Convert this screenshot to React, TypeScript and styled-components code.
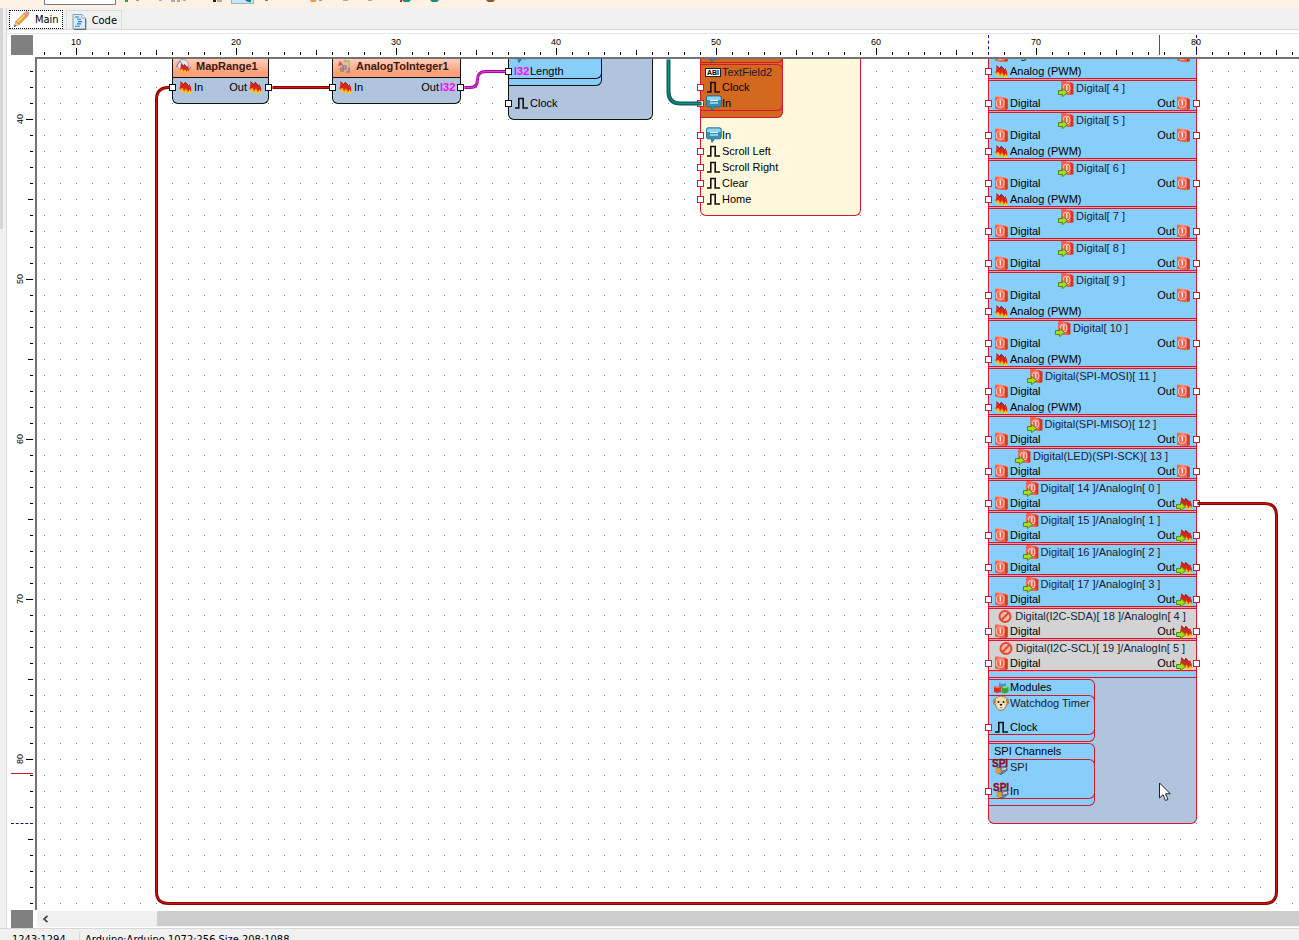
import React, { useEffect, useState } from "react";
import styled, { createGlobalStyle, css } from "styled-components";

const RED = "#d3182f";
const SKY = "#87cefa";
const STEEL = "#b0c4de";

const GlobalStyle = createGlobalStyle`
  * { box-sizing: border-box; }
  html, body, #root { height: 100%; }
  body {
    margin: 0;
    overflow: hidden;
    background: #f0f0f0;
    color: #000;
    font: 11px/16px "Liberation Sans", Arial, sans-serif;
  }
  button { font: inherit; color: inherit; padding: 0; margin: 0; border: 0; background: none; }
`;

const Page = styled.div`
  display: flex;
  flex-direction: column;
  height: 100vh;
`;

/* ---------- toolbar ---------- */

const Toolbar = styled.div`
  flex: none;
  height: 8px;
  overflow: hidden;
  display: flex;
  align-items: flex-start;
  padding-left: 44px;
  background: #fdf0e4;
`;

const SearchBox = styled.input`
  width: 72px;
  height: 5px;
  padding: 0;
  border: 1px solid #7a7a7a;
  border-top: 0;
  background: #fff;
`;

const ToolButton = styled.button<{ $active?: boolean }>`
  flex: none;
  width: 23px;
  height: 4px;
  display: flex;
  ${(p) => p.$active && css`
    background: #cce4f7;
    border: 1px solid #8ab8dc;
    border-top: 0;
  `}
  svg { display: block; overflow: visible; }
`;

/* ---------- body ---------- */

const Body = styled.div`
  flex: 1;
  min-height: 0;
  display: flex;
`;

const SideStrip = styled.div`
  flex: none;
  width: 7px;
  border-right: 1px solid #d5dcdc;
  background: #f0f0f0;
`;

const SideThumb = styled.div`
  width: 3px;
  height: 24%;
  background: #d6d6d6;
`;

const Main = styled.div`
  flex: 1;
  min-width: 0;
  display: flex;
  flex-direction: column;
`;

const Tabs = styled.div`
  flex: none;
  height: 22px;
  display: flex;
  align-items: flex-start;
  gap: 3px;
  padding: 2px 2px 0;
  border-bottom: 1px solid #d9d9d9;
`;

const Tab = styled.button<{ $active?: boolean }>`
  height: ${(p) => (p.$active ? 19 : 20)}px;
  display: flex;
  align-items: center;
  gap: 5px;
  padding: ${(p) => (p.$active ? "0 3px" : "2px 4px 0 5px")};
  font-family: "DejaVu Sans Condensed", "Liberation Sans", sans-serif;
  line-height: 16px;
  border: 1px solid #dcdcdc;
  ${(p) => p.$active && css`
    background: #fff;
    border: 1px dotted #000;
  `}
`;

const Workspace = styled.div`
  flex: 1;
  min-height: 0;
  display: grid;
  grid-template-columns: 24px minmax(0, 1fr);
  grid-template-rows: 22px minmax(0, 1fr) 18px;
  margin-top: 3px;
  padding: 1px 0 0 4px;
  background: #fff;
  border-top: 1px solid #e6e6e6;
  box-shadow: 0 -3px 0 #fff;
`;

const Corner = styled.div<{ $gap?: number }>`
  width: 22px;
  margin-bottom: ${(p) => p.$gap ?? 0}px;
  background: #808080;
`;

const HRuler = styled.div`
  position: relative;
  display: flex;
  overflow: hidden;
  padding: 1px 0 2px 1px;
`;

const VRuler = styled.div`
  position: relative;
  display: flex;
  flex-direction: column;
  overflow: hidden;
  padding-top: 6px;
  width: 22px;
`;

const HCell = styled.div`
  flex: none;
  width: 16px;
  display: flex;
  flex-direction: column;
  align-items: center;
  font-size: 9px;
  line-height: 12px;
`;

const VCell = styled.div`
  flex: none;
  height: 16px;
  display: flex;
  align-items: center;
  justify-content: space-between;
  padding-left: 3px;
  font-size: 9px;
  line-height: 12px;
`;

const VLabel = styled.span`
  writing-mode: vertical-rl;
  transform: rotate(180deg);
`;

const HTick = styled.i<{ $size: number }>`
  width: 1px;
  height: ${(p) => p.$size}px;
  margin-top: auto;
  background: #000;
`;

const VTick = styled.i<{ $size: number }>`
  height: 1px;
  width: ${(p) => p.$size}px;
  margin-left: auto;
  background: #000;
`;

const HMarker = styled.i<{ $at: number; $dashed?: boolean }>`
  position: absolute;
  top: 0;
  left: ${(p) => p.$at}px;
  height: 20px;
  border-left: 1px ${(p) => (p.$dashed ? "dashed #1414a0" : `solid ${RED}`)};
`;

const VMarker = styled.i<{ $at: number; $dashed?: boolean }>`
  position: absolute;
  left: 0;
  top: ${(p) => p.$at}px;
  width: 22px;
  border-top: 1px ${(p) => (p.$dashed ? "dashed #14147a" : `solid ${RED}`)};
`;

const Canvas = styled.div`
  position: relative;
  overflow: hidden;
  border: solid #737373;
  border-width: 2px 0 0 2px;
  background: #fff;
`;

const Layer = styled.svg`
  position: absolute;
  inset: 0;
  width: 100%;
  height: 100%;
  pointer-events: none;
`;

const Pointer = styled.svg`
  position: absolute;
  left: 1122px;
  top: 723px;
`;

const ScrollBar = styled.div`
  display: flex;
  height: 16px;
  margin: 1px 0 0 2px;
  background: #f0f0f0;
`;

const ScrollArrow = styled.button`
  width: 17px;
  display: grid;
  place-items: center;
`;

const ScrollThumb = styled.div`
  flex: 1;
  margin-left: 103px;
  height: 15px;
  background: #cdcdcd;
`;

const StatusBar = styled.div`
  flex: none;
  height: 12px;
  overflow: hidden;
  display: flex;
  gap: 5px;
  padding: 3px 0 0 12px;
  border-top: 1px solid #d7d7d7;
  font-size: 11px;
  line-height: 16px;
  font-family: "DejaVu Sans Condensed", "Liberation Sans", sans-serif;
  white-space: nowrap;
`;

const StatusCell = styled.span`
  min-width: 68px;
  border-right: 1px solid #d7d7d7;
`;

/* ---------- nodes ---------- */

const Node = styled.section<{ $x: number; $y: number; $w: number; $bg: string; $line: string; $pad?: number }>`
  position: absolute;
  left: ${(p) => p.$x}px;
  top: ${(p) => p.$y}px;
  width: ${(p) => p.$w}px;
  padding-bottom: ${(p) => p.$pad ?? 8}px;
  border: 1px solid ${(p) => p.$line};
  border-top: 0;
  border-radius: 0 0 6px 6px;
  background: ${(p) => p.$bg};
  --line: ${(p) => p.$line};
  white-space: nowrap;
`;

const Header = styled.h2`
  display: flex;
  align-items: center;
  gap: 4px;
  height: 24px;
  margin: 0 0 1px;
  padding: 0 2px;
  font-size: 11px;
  color: #3a1a10;
  border-bottom: 1px solid var(--line);
  background: linear-gradient(#ffe0d4, #ffa07a 80%);
`;

const Group = styled.div<{ $w: number; $bg: string; $top?: number; $pad?: number }>`
  width: ${(p) => p.$w}px;
  margin-top: ${(p) => p.$top ?? 0}px;
  padding-bottom: ${(p) => p.$pad ?? 6}px;
  background: ${(p) => p.$bg};
  border: 1px solid var(--line);
  border-left: 0;
  border-radius: 0 6px 6px 0;
`;

const GroupTitle = styled.div`
  display: flex;
  height: 15px;
  line-height: 15px;
  padding-left: 5px;
`;

const Element = styled.div<{ $gap?: number; $bottom?: number }>`
  margin: 0 -1px ${(p) => p.$bottom ?? 0}px 0;
  border: 1px solid var(--line);
  border-left: 0;
  border-radius: 0 6px 6px 0;
  > :last-child { margin-bottom: -1px; }
  > :nth-child(2) { margin-top: ${(p) => p.$gap ?? 0}px; }
`;

const ElementTitle = styled.div<{ $h?: number }>`
  display: flex;
  align-items: center;
  height: ${(p) => p.$h ?? 14}px;
  padding-left: 4px;
  color: #1a1a2a;
  svg, b { flex: none; margin-right: 1px; }
`;

const ChannelList = styled.div`
  padding-bottom: 5px;
  border-bottom: 1px solid var(--line);
  background: ${SKY};
`;

const Channel = styled.div<{ $off?: boolean }>`
  border: solid var(--line);
  border-width: 1px 0;
  background: ${(p) => (p.$off ? "#d3d3d3" : SKY)};
  box-shadow: 0 1px 0 #e59bb4;
  margin-bottom: 1px;
  > :last-child { margin-bottom: -1px; }
`;

const ChannelTitle = styled.div`
  height: 14px;
  display: flex;
  justify-content: center;
  align-items: center;
  gap: 2px;
  padding-right: 2px;
  color: #14233a;
  svg { flex: none; position: relative; top: 1px; }
`;

const PinRow = styled.div<{ $before?: number }>`
  position: relative;
  display: flex;
  align-items: center;
  justify-content: space-between;
  height: 16px;
  margin-top: ${(p) => p.$before ?? 0}px;
  padding: 0 4px 0 5px;
`;

const PinLabel = styled.span`
  display: flex;
  align-items: center;
  height: 16px;
`;

const IconSlot = styled.span`
  display: flex;
  width: 16px;
`;

const OutText = styled.span`
  margin-right: 1px;
`;

const Port = styled.i<{ $side: "left" | "right" }>`
  position: absolute;
  top: 5px;
  ${(p) => p.$side}: -4px;
  width: 7px;
  height: 7px;
  background: #fff;
  border: 1px solid var(--line);
`;

const TypeTag = styled.b`
  color: #ff00ff;
`;

const AbcTag = styled.b`
  width: 16px;
  height: 9px;
  padding: 0 1px;
  border: 1px solid #222;
  background: #fff;
  color: #000;
  font-size: 7px;
  line-height: 8px;
  overflow: hidden;
`;

/* ---------- icons ---------- */

const DigitalIcon = () => (
  <svg width="16" height="16" viewBox="0 0 16 16">
    <path d="M1 1.500 11 2.500 13.800 4V14.200L11 15 1 13.700Z" fill="#d23a24" />
    <path d="M1 1.500 11 2.600V15L1 13.700Z" fill="#f4634b" />
    <path d="M1 1.500 11 2.600 13.800 4" fill="none" stroke="#f9a493" strokeWidth=".8" />
    <ellipse cx="6.200" cy="8.200" rx="3.800" ry="4.200" fill="none" stroke="#ffd9d0" strokeWidth=".9" />
    <path d="M5.300 6.500 6.300 6V10.500" fill="none" stroke="#fff" strokeWidth="1.100" />
  </svg>
);

const GreenArrow = () => (
  <path d="M.5 9.500H4.500V7.300L9.500 11.500 4.500 15.700V13.500H.5Z" fill="#a6dc1c" stroke="#4f7d0c" strokeWidth=".9" />
);

const DigitalInOutIcon = () => (
  <svg width="16" height="16" viewBox="0 0 16 16">
    <path d="M3.500 .3 12.500 1.300 15.500 2.700V13.300L12.500 14 3.500 12.500Z" fill="#d23a24" />
    <path d="M3.500 .3 12.500 1.300V14L3.500 12.500Z" fill="#f4634b" />
    <ellipse cx="8.600" cy="7" rx="3.400" ry="4" fill="none" stroke="#ffd9d0" strokeWidth=".9" />
    <path d="M7.800 5.300 8.800 4.800V9.300" fill="none" stroke="#fff" strokeWidth="1.100" />
    <GreenArrow />
  </svg>
);

const flame = (
  <>
    <path d="M2 8 5 6 9 9 13 8.500V14.500H9L6.500 12 5 14 1.500 11.500Z" fill="#ffcf1c" />
    <path d="M1.300 10.500Q2.500 7 2.500 2.500L6 5.500 7.300 3 10.500 6.500 11.500 5 13.300 9.500 13 13 11.500 10.500 10 13 8 9.500 5.800 12.500 4.500 8.800Z" fill="#d7261b" />
    <path d="M2.600 2.700 6 5.700 7.300 3.200 10.300 6.700" fill="none" stroke="#8b1a14" strokeWidth=".9" />
    <path d="M2 11 4.800 10 5.800 13 8 11 9.800 14" fill="none" stroke="#f39a14" strokeWidth=".9" />
  </>
);

const AnalogIcon = () => (
  <svg width="16" height="16" viewBox="0 0 16 16">{flame}</svg>
);

const AnalogOutIcon = () => (
  <svg width="16" height="16" viewBox="0 0 16 16">
    <g transform="translate(2.500 0)">{flame}</g>
    <GreenArrow />
  </svg>
);

const ClockIcon = () => (
  <svg width="16" height="16" viewBox="0 0 16 16">
    <path d="M1 13H4.800V3.500H9.200V13H14" fill="none" stroke="#111" strokeWidth="1.600" />
  </svg>
);

const ChatIcon = () => (
  <svg width="16" height="16" viewBox="0 0 16 16">
    <path d="M2 .8H13.500Q15.300 .8 15.300 2.800V9.800Q15.300 11.800 13.500 11.800H8.500L6 15.500 5 11.800H2Q.4 11.800 .4 9.800V2.800Q.4 .8 2 .8Z" fill="#2f93bd" stroke="#1a6588" strokeWidth=".8" />
    <path d="M2 1.500H13.500Q14.700 1.500 14.700 3V5H1V3Q1 1.500 2 1.500Z" fill="#8fd3ec" />
    <path d="M4 5.500H12M4 8H12" stroke="#fff" strokeWidth="1.200" />
  </svg>
);

const DisabledIcon = () => (
  <svg width="16" height="16" viewBox="0 0 16 16">
    <circle cx="8" cy="7.500" r="5.500" fill="#f7b9a8" stroke="#e2492f" strokeWidth="2" />
    <path d="M11.500 3.800 4.500 11" stroke="#e2492f" strokeWidth="2" />
  </svg>
);

const CubesIcon = () => (
  <svg width="16" height="15" viewBox="0 0 16 15">
    <path d="M5 3 9 2 12 3V8H5Z" fill="#4f8fd0" />
    <path d="M5 3 9 2 12 3 8.500 4Z" fill="#a6cdf0" />
    <path d="M0 7 4 6 7 7V12L3 13 0 12Z" fill="#d9322b" />
    <path d="M0 7 4 6 7 7 3.500 8Z" fill="#f58b80" />
    <path d="M7.500 7 11 6 14.500 7V12L11 13.500 7.500 12.500Z" fill="#32a83b" />
    <path d="M7.500 7 11 6 14.500 7 11 8.200Z" fill="#97e08e" />
  </svg>
);

const DogIcon = () => (
  <svg width="16" height="16" viewBox="0 0 16 16">
    <path d="M3 2.500Q8-.5 13 2.500 16 4 15.500 8.500 14.500 10 13.500 9.500 12.500 15 8 15.500 3.500 15 2.500 9.500 1 10 .5 8.500 0 4 3 2.500Z" fill="#f0d9b0" stroke="#8a6a3c" strokeWidth=".8" />
    <path d="M3 3Q.5 5 1 8.500L2.500 9ZM13 3Q15.500 5 15 8.500L13.500 9Z" fill="#a9773e" />
    <ellipse cx="8" cy="11" rx="3" ry="2.800" fill="#fff6e2" />
    <circle cx="5.500" cy="7" r="1" fill="#2b1a10" />
    <circle cx="10.500" cy="7" r="1" fill="#2b1a10" />
    <ellipse cx="8" cy="9.700" rx="1.500" ry="1" fill="#2b1a10" />
    <path d="M6.500 12.300Q8 13.500 9.500 12.300" fill="none" stroke="#7b3a1a" strokeWidth=".7" />
  </svg>
);

const SpiIcon = () => (
  <svg width="16" height="16" viewBox="0 0 16 16" style={{ overflow: "visible" }}>
    <path d="M4 8.500 12 7 14.500 11 8 15.500 3 13Z" fill="#6d7f99" stroke="#3f4759" strokeWidth=".7" />
    <path d="M2 9.500 7 9 8 14 4 14.500Z" fill="#e0a030" />
    <path d="M9 10.500 13 9.500" stroke="#d8e2ef" strokeWidth="1.300" />
    <text x="-1" y="8" fontFamily="Liberation Sans" fontSize="10" fontWeight="bold" fill="#8c0a1a" stroke="#8c0a1a" strokeWidth=".3">SPI</text>
  </svg>
);

const MapRangeIcon = () => (
  <svg width="17" height="16" viewBox="0 0 17 16">
    <circle cx="8" cy="7" r="5.500" fill="#efe4e4" stroke="#a8a0ac" />
    <path d="M1 9 5 3 9 9 13 13 16 9" fill="none" stroke="#7b6fa8" strokeWidth="1" />
    <g transform="translate(4 4) scale(.75)">{flame}</g>
  </svg>
);

const ToIntegerIcon = () => (
  <svg width="17" height="16" viewBox="0 0 17 16">
    <path d="M2 8 4 2 7 4 9 1 13 3 11 8Z" fill="#f3b0a4" />
    <path d="M3 8 5 3 8 7Z" fill="#c85a4a" />
    <path d="M9 3H14V8" fill="none" stroke="#9bbf6a" strokeWidth="1.400" />
    <path d="M6 14V9M8 14V8H11V11H8M11 14H14V9" fill="none" stroke="#5e6d94" strokeWidth="1.100" />
    <path d="M1 14.500H6M3 11H5" stroke="#e0b020" strokeWidth="1.300" />
  </svg>
);

const PencilIcon = () => (
  <svg width="17" height="17" viewBox="0 0 17 17">
    <path d="M1 15.500 3 10.500 6 13.500Z" fill="#f2d6a8" stroke="#9b7a45" strokeWidth=".6" />
    <path d="M3 10.500 11 2.500 14 5.500 6 13.500Z" fill="#f5a431" stroke="#b56a12" strokeWidth=".7" />
    <path d="M4.300 11 11.700 3.700" stroke="#ffd98a" strokeWidth="1.300" />
    <path d="M11 2.500 12.500 1Q14-.2 15.300 1.200 16.600 2.700 15.500 4L14 5.500Z" fill="#e9a196" stroke="#9f6a62" strokeWidth=".6" />
    <path d="M1 15.700 1.800 13.700 3 15Z" fill="#333" />
  </svg>
);

const CodeIcon = () => (
  <svg width="15" height="17" viewBox="0 0 15 17">
    <path d="M1 1.500H10L13.500 5V16H1Z" fill="#dcebfa" stroke="#7f9dbd" />
    <path d="M10 1.500V5H13.500" fill="#fff" stroke="#7f9dbd" strokeWidth=".8" />
    <path d="M3 4H7M5 6.300H9M6 8.600H10M5 10.900H9M3 13.200H8" stroke="#2f78c8" strokeWidth="1.100" />
    <path d="M13.800 6V16.500H2" fill="none" stroke="#4a4f58" strokeWidth=".8" />
  </svg>
);

/* ---------- data ---------- */

const tools: { mark: React.ReactNode; active?: boolean }[] = [
  { mark: <><path d="M9 0h3v2h-3z" fill="#2ea02e" /><path d="M20 0h3v1h-3z" fill="#999" /></> },
  { mark: <path d="M20 0h3v1h-3z" fill="#aaa" /> },
  { mark: <path d="M9 0h4v2h-4zM15 0h3v2h-3zM21 0h3v1h-3z" fill="#aaa" /> },
  { mark: null },
  { mark: <><path d="M5 0h3v2h-3z" fill="#222" /><path d="M9 0h5v2h-5z" fill="#b5a9a0" /></> },
  { mark: <path d="M13 0h6v2h-3z" fill="#17836c" />, active: true },
  { mark: <path d="M11 0h3v1h-3z" fill="#777" /> },
  { mark: null },
  { mark: <><path d="M10 0h6v2h-5z" fill="#e9a04a" /><path d="M19 0h3v1h-3z" fill="#999" /></> },
  { mark: <path d="M20 0h5v1h-5z" fill="#b5a9a0" /> },
  { mark: <path d="M22 0h4v1h-4z" fill="#b5a9a0" /> },
  { mark: null },
  { mark: <><path d="M8 0h2v2h-2z" fill="#e0203a" /><path d="M10 0h9l-2 2h-5z" fill="#1c8a7c" /></> },
  { mark: <path d="M15 0h9l-2 2h-5z" fill="#1c8a7c" /> },
  { mark: null },
  { mark: null },
  { mark: <path d="M2 0h9l-2 2h-5z" fill="#8a5a2a" /> },
];

type ChannelData = { title: string; pwm?: boolean; analog?: boolean; off?: boolean };

const channels: ChannelData[] = [
  { title: "Digital[ 3 ]", pwm: true },
  { title: "Digital[ 4 ]" },
  { title: "Digital[ 5 ]", pwm: true },
  { title: "Digital[ 6 ]", pwm: true },
  { title: "Digital[ 7 ]" },
  { title: "Digital[ 8 ]" },
  { title: "Digital[ 9 ]", pwm: true },
  { title: "Digital[ 10 ]", pwm: true },
  { title: "Digital(SPI-MOSI)[ 11 ]", pwm: true },
  { title: "Digital(SPI-MISO)[ 12 ]" },
  { title: "Digital(LED)(SPI-SCK)[ 13 ]" },
  { title: "Digital[ 14 ]/AnalogIn[ 0 ]", analog: true },
  { title: "Digital[ 15 ]/AnalogIn[ 1 ]", analog: true },
  { title: "Digital[ 16 ]/AnalogIn[ 2 ]", analog: true },
  { title: "Digital[ 17 ]/AnalogIn[ 3 ]", analog: true },
  { title: "Digital(I2C-SDA)[ 18 ]/AnalogIn[ 4 ]", analog: true, off: true },
  { title: "Digital(I2C-SCL)[ 19 ]/AnalogIn[ 5 ]", analog: true, off: true },
];

/* ---------- parts ---------- */

type PinProps = {
  label: string;
  icon: React.ReactNode;
  out?: React.ReactNode;
  before?: number;
};

const Pin = ({ label, icon, out, before }: PinProps) => (
  <PinRow $before={before}>
    <Port $side="left" />
    <PinLabel><IconSlot>{icon}</IconSlot>{label}</PinLabel>
    {out && (
      <>
        <PinLabel><OutText>Out</OutText><IconSlot>{out}</IconSlot></PinLabel>
        <Port $side="right" />
      </>
    )}
  </PinRow>
);

const tickSize = (n: number) => (n % 10 === 0 ? 7 : n % 5 === 0 ? 5 : 3);
const range = (from: number, count: number) => Array.from({ length: count }, (_, i) => from + i);

/* Number of 16px grid units that fit along each ruler. */
const countUnits = () => ({
  across: Math.ceil((window.innerWidth - 36) / 16),
  down: Math.ceil((window.innerHeight - 93) / 16),
});

const useUnits = () => {
  const [units, setUnits] = useState(countUnits);
  useEffect(() => {
    const update = () => setUnits(countUnits());
    window.addEventListener("resize", update);
    return () => window.removeEventListener("resize", update);
  }, []);
  return units;
};

const Wire = ({ d, edge, core, width = 3 }: { d: string; edge: string; core: string; width?: number }) => (
  <g fill="none" transform="translate(.5 .5)">
    <path d={d} stroke={edge} strokeWidth={width} />
    <path d={d} stroke={core} strokeWidth={1} />
  </g>
);

export default function App() {
  const units = useUnits();
  return (
    <Page>
      <GlobalStyle />
      <Toolbar>
        <SearchBox aria-label="Search" />
        {tools.map((t, i) => (
          <ToolButton key={i} $active={t.active} aria-label={`Tool ${i + 1}`}>
            <svg width="21" height="3">{t.mark}</svg>
          </ToolButton>
        ))}
      </Toolbar>

      <Body>
        <SideStrip><SideThumb /></SideStrip>
        <Main>
          <Tabs role="tablist">
            <Tab role="tab" aria-selected="true" $active><PencilIcon />Main</Tab>
            <Tab role="tab" aria-selected="false"><CodeIcon />Code</Tab>
          </Tabs>

          <Workspace>
            <Corner $gap={2} />
            <HRuler>
              {range(8, units.across).map((n) => (
                <HCell key={n}>
                  {n % 10 === 0 && <span>{n}</span>}
                  <HTick $size={tickSize(n)} />
                </HCell>
              ))}
              <HMarker $at={953} $dashed />
              <HMarker $at={1161} $dashed />
              <HMarker $at={1124} />
            </HRuler>

            <VRuler>
              {range(37, units.down).map((n) => (
                <VCell key={n}>
                  {n % 10 === 0 && n < 37 + units.down - 1 && <VLabel>{n}</VLabel>}
                  <VTick $size={tickSize(n)} />
                </VCell>
              ))}
              <VMarker $at={716} />
              <VMarker $at={766} $dashed />
            </VRuler>

            <Canvas>
              <Layer>
                <defs>
                  <pattern id="dots" x="7" y="12" width="16" height="16" patternUnits="userSpaceOnUse">
                    <rect width="1" height="1" fill="#8c8c8c" />
                  </pattern>
                </defs>
                <rect width="100%" height="100%" fill="url(#dots)" />
              </Layer>

              <Node $x={135} $y={-5} $w={97} $bg={STEEL} $line="#111">
                <Header><MapRangeIcon />MapRange1</Header>
                <Pin label="In" icon={<AnalogIcon />} out={<AnalogIcon />} />
              </Node>

              <Node $x={295} $y={-5} $w={129} $bg={STEEL} $line="#111">
                <Header><ToIntegerIcon />AnalogToInteger1</Header>
                <Pin label="In" icon={<AnalogIcon />} out={<TypeTag>I32</TypeTag>} />
              </Node>

              <Node $x={471} $y={-13} $w={145} $bg={STEEL} $line="#111">
                <Group $w={93} $bg={SKY} $top={-1}>
                  <Element>
                    <ElementTitle $h={16}><ChatIcon /></ElementTitle>
                    <Pin label="Length" icon={<TypeTag>I32</TypeTag>} />
                  </Element>
                </Group>
                <Pin label="Clock" icon={<ClockIcon />} before={9} />
              </Node>

              <Node $x={663} $y={-44} $w={161} $bg="#fff8dc" $line={RED}>
                <Group $w={82} $bg="#d2691e" $pad={5}>
                  {["TextField1", "TextField2"].map((name) => (
                    <Element key={name} $bottom={1}>
                      <ElementTitle><AbcTag>ABI</AbcTag>{name}</ElementTitle>
                      <Pin label="Clock" icon={<ClockIcon />} />
                      <Pin label="In" icon={<ChatIcon />} />
                    </Element>
                  ))}
                </Group>
                <Pin label="In" icon={<ChatIcon />} before={9} />
                <Pin label="Scroll Left" icon={<ClockIcon />} />
                <Pin label="Scroll Right" icon={<ClockIcon />} />
                <Pin label="Clear" icon={<ClockIcon />} />
                <Pin label="Home" icon={<ClockIcon />} />
              </Node>

              <Node $x={951} $y={-27} $w={209} $bg={STEEL} $line={RED} $pad={17}>
                <ChannelList>
                  {channels.map((c) => (
                    <Channel key={c.title} $off={c.off}>
                      <ChannelTitle>
                        {c.off ? <DisabledIcon /> : <DigitalInOutIcon />}
                        {c.title}
                      </ChannelTitle>
                      <Pin
                        label="Digital"
                        icon={<DigitalIcon />}
                        out={c.analog ? <AnalogOutIcon /> : <DigitalIcon />}
                      />
                      {c.pwm && <Pin label="Analog (PWM)" icon={<AnalogIcon />} />}
                    </Channel>
                  ))}
                </ChannelList>
                <Group $w={106} $bg={SKY} $top={1}>
                  <GroupTitle><IconSlot><CubesIcon /></IconSlot>Modules</GroupTitle>
                  <Element $gap={9}>
                    <ElementTitle><DogIcon />Watchdog Timer</ElementTitle>
                    <Pin label="Clock" icon={<ClockIcon />} />
                  </Element>
                </Group>
                <Group $w={106} $bg={SKY} $top={1}>
                  <GroupTitle>SPI Channels</GroupTitle>
                  <Element $gap={9}>
                    <ElementTitle><SpiIcon />SPI</ElementTitle>
                    <Pin label="In" icon={<SpiIcon />} />
                  </Element>
                </Group>
              </Node>

              <Layer>
                <Wire d="M132 28H131Q119 28 119 40V832Q119 844 131 844H1227Q1239 844 1239 832V456Q1239 444 1227 444H1160" edge="#8c0000" core="#d01414" />
                <Wire d="M235 28H292" edge="#8c0000" core="#d01414" />
                <Wire d="M427 28H433Q440 28 440 20 440 12 448 12H468" edge="#a0109a" core="#f032e6" />
                <Wire d="M631 0V32Q631 44 643 44H664" edge="#0c6660" core="#1a8f86" width={4} />
              </Layer>

              <Pointer width="13" height="20" viewBox="0 0 13 20">
                <path d="M.5 1V16L4 12.700 6.500 18.500 9 17.400 6.500 11.800H11.300Z" fill="#fff" stroke="#222" />
              </Pointer>
            </Canvas>

            <Corner />
            <ScrollBar>
              <ScrollArrow aria-label="Scroll left">
                <svg width="7" height="8" viewBox="0 0 7 8">
                  <path d="M5.500 .8 2 4 5.500 7.200" fill="none" stroke="#444" strokeWidth="1.700" />
                </svg>
              </ScrollArrow>
              <ScrollThumb />
            </ScrollBar>
          </Workspace>
        </Main>
      </Body>

      <StatusBar>
        <StatusCell>1243:1294</StatusCell>
        <span>Arduino:Arduino 1072:256 Size 208:1088</span>
      </StatusBar>
    </Page>
  );
}
